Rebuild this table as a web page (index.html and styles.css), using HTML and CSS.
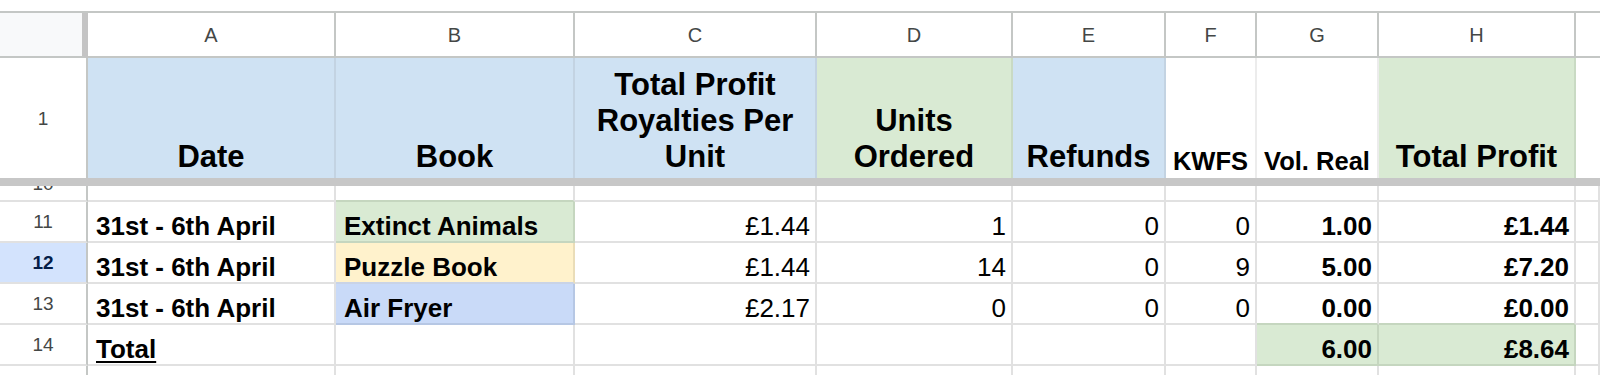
FILE: index.html
```html
<!DOCTYPE html>
<html lang="en">
<head>
<meta charset="utf-8">
<title>Sheet</title>
<link rel="stylesheet" href="styles.css">
</head>
<body>
<div class="sheet">
  <div class="cell corner"></div>
  <div class="cell colhead">A</div>
  <div class="cell colhead">B</div>
  <div class="cell colhead">C</div>
  <div class="cell colhead">D</div>
  <div class="cell colhead">E</div>
  <div class="cell colhead">F</div>
  <div class="cell colhead">G</div>
  <div class="cell colhead">H</div>
  <div class="cell colhead last"></div>

  <div class="cell rowhead r1">1</div>
  <div class="cell hdr blue">Date</div>
  <div class="cell hdr blue">Book</div>
  <div class="cell hdr blue">Total Profit<br>Royalties Per<br>Unit</div>
  <div class="cell hdr green">Units<br>Ordered</div>
  <div class="cell hdr blue">Refunds</div>
  <div class="cell hdr small">KWFS</div>
  <div class="cell hdr small">Vol. Real</div>
  <div class="cell hdr green">Total Profit</div>
  <div class="cell hdr plain"></div>

  <div class="freeze"></div>

  <div class="cell rowhead cut"><span class="cut-num">10</span></div>
  <div class="cell"></div>
  <div class="cell edge-green"></div>
  <div class="cell"></div>
  <div class="cell"></div>
  <div class="cell"></div>
  <div class="cell"></div>
  <div class="cell"></div>
  <div class="cell"></div>
  <div class="cell"></div>

  <div class="cell rowhead">11</div>
  <div class="cell b">31st - 6th April</div>
  <div class="cell b bk-green">Extinct Animals</div>
  <div class="cell num">£1.44</div>
  <div class="cell num">1</div>
  <div class="cell num">0</div>
  <div class="cell num">0</div>
  <div class="cell num b">1.00</div>
  <div class="cell num b">£1.44</div>
  <div class="cell"></div>

  <div class="cell rowhead sel">12</div>
  <div class="cell b">31st - 6th April</div>
  <div class="cell b bk-yellow">Puzzle Book</div>
  <div class="cell num">£1.44</div>
  <div class="cell num">14</div>
  <div class="cell num">0</div>
  <div class="cell num">9</div>
  <div class="cell num b">5.00</div>
  <div class="cell num b">£7.20</div>
  <div class="cell"></div>

  <div class="cell rowhead">13</div>
  <div class="cell b">31st - 6th April</div>
  <div class="cell b bk-blue">Air Fryer</div>
  <div class="cell num">£2.17</div>
  <div class="cell num">0</div>
  <div class="cell num">0</div>
  <div class="cell num">0</div>
  <div class="cell num b edge-green">0.00</div>
  <div class="cell num b edge-green">£0.00</div>
  <div class="cell"></div>

  <div class="cell rowhead">14</div>
  <div class="cell b"><span class="u">Total</span></div>
  <div class="cell"></div>
  <div class="cell"></div>
  <div class="cell"></div>
  <div class="cell"></div>
  <div class="cell"></div>
  <div class="cell num b bk-green">6.00</div>
  <div class="cell num b bk-green">£8.64</div>
  <div class="cell"></div>

  <div class="cell rowhead tail"></div>
  <div class="cell tail"></div>
  <div class="cell tail"></div>
  <div class="cell tail"></div>
  <div class="cell tail"></div>
  <div class="cell tail"></div>
  <div class="cell tail"></div>
  <div class="cell tail"></div>
  <div class="cell tail"></div>
  <div class="cell tail"></div>
</div>
</body>
</html>
```

FILE: styles.css
```css
html, body {
  margin: 0;
  padding: 0;
  background: #ffffff;
  overflow: hidden;
}

body {
  font-family: "Liberation Sans", Arial, sans-serif;
  color: #000000;
}

.sheet {
  margin-top: 11px;
  border-top: 2px solid #c4c7c5;
  display: grid;
  grid-template-columns: 88px 248px 239px 242px 196px 153px 91px 122px 197px 24px;
  grid-template-rows: 45px 120px 8px 16px 41px 41px 41px 41px 9px;
}

.cell {
  box-sizing: border-box;
  border-right: 2px solid #e1e1e1;
  border-bottom: 2px solid #e1e1e1;
  display: flex;
  align-items: flex-end;
  overflow: hidden;
  white-space: nowrap;
  padding: 0 5px 0 8px;
  font-size: 26px;
  line-height: 29px;
}

.cell.tail {
  border-bottom: none;
}

.corner {
  background: #f8f9fa;
  border-right: 6px solid #c4c4c4;
  border-bottom: 2px solid #c4c7c5;
}

.colhead {
  align-items: center;
  justify-content: center;
  font-size: 20px;
  line-height: 20px;
  color: #444746;
  border-right-color: #c4c7c5;
  border-bottom-color: #c4c7c5;
  padding: 0;
}

.colhead.last {
  border-right: none;
}

.rowhead {
  align-items: center;
  justify-content: center;
  font-size: 19px;
  line-height: 19px;
  color: #444746;
  border-right-color: #c4c7c5;
  padding: 0;
}

.rowhead.r1 {
  border-bottom: none;
}

.rowhead.sel {
  background: #d3e3fd;
  color: #041e49;
  font-weight: bold;
}

.rowhead.cut {
  align-items: flex-start;
}

.cut-num {
  margin-top: -12px;
}

.hdr {
  justify-content: center;
  text-align: center;
  font-weight: bold;
  font-size: 31px;
  line-height: 36px;
  padding: 0 4px 3px;
  border-bottom: none;
}

.hdr.small {
  font-size: 25.5px;
  line-height: 29px;
  padding-bottom: 2px;
  border-right-color: #ececec;
}

.hdr.plain {
  border-right: none;
}

.blue {
  background: #cfe2f3;
  border-right-color: #c3d3e2;
}

.green {
  background: #d9ead3;
  border-right-color: #c9dac3;
}

.freeze {
  grid-column: 1 / -1;
  background: #c7c7c7;
}

.b {
  font-weight: bold;
}

.num {
  justify-content: flex-end;
}

.u {
  text-decoration: underline;
  text-decoration-thickness: 2px;
  text-underline-offset: 3px;
}

.bk-green {
  background: #d9ead3;
  border-right-color: #c5d6bf;
  border-bottom-color: #c5d6bf;
}

.bk-yellow {
  background: #fff2cc;
  border-right-color: #eaddb8;
  border-bottom-color: #c9d3e6;
}

.bk-blue {
  background: #c9daf8;
  border-right-color: #b6c7e4;
  border-bottom-color: #b6c7e4;
}

.edge-green {
  border-bottom-color: #c5d6bf;
}
```
